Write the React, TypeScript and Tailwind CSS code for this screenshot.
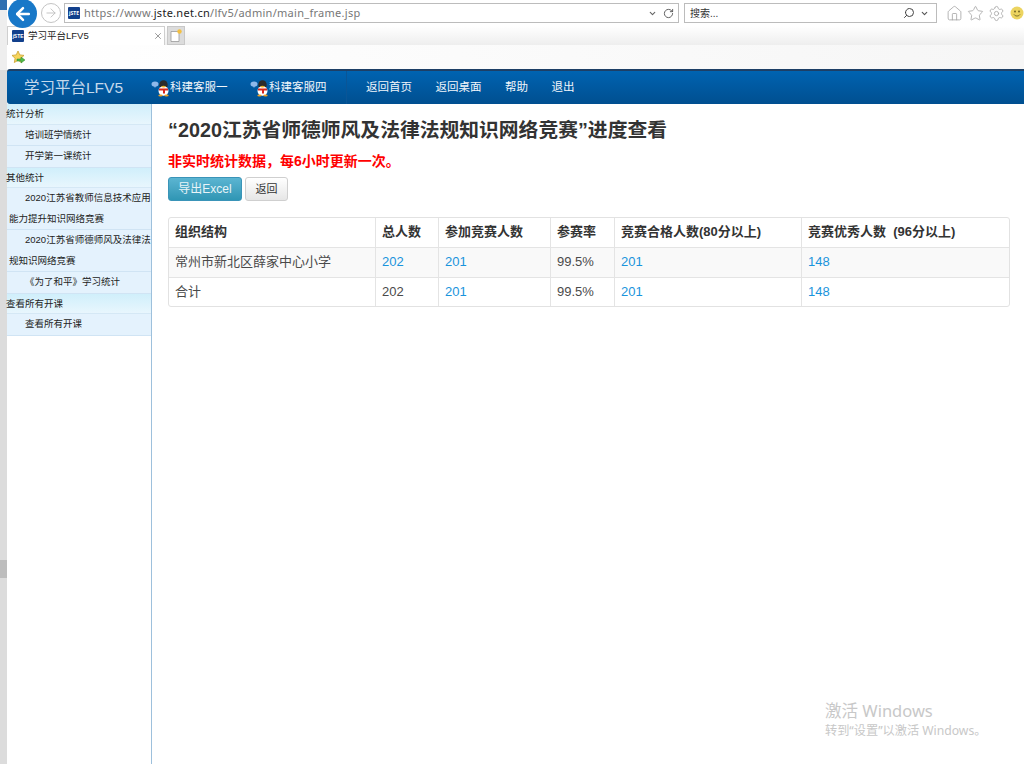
import React from "react";
import { ArrowLeft, ArrowRight, ChevronDown, Home, RotateCw, Search, Settings, Star, X } from "lucide-react";

const CJK = "font-['Liberation_Sans','Noto_Sans_CJK_SC',sans-serif]";
const UI = "font-['Noto_Sans','Noto_Sans_CJK_SC',sans-serif]";

const SiteIcon = () => (
  <div className="w-[12px] h-[12px] bg-[#12408c] rounded-[1px] flex items-center justify-center shrink-0">
    <span className="text-[5px] leading-none text-white font-bold">jSTE</span>
  </div>
);

const QQIcon = () => (
  <svg width="20" height="18" viewBox="0 0 20 18" className="shrink-0">
    <ellipse cx="4" cy="5" rx="3.5" ry="2.6" fill="#8fb8ea" />
    <path d="M3 7l2 0-1 2z" fill="#8fb8ea" />
    <ellipse cx="12.5" cy="6" rx="4.2" ry="4.8" fill="#2b2b2b" />
    <ellipse cx="12.5" cy="12" rx="5" ry="4.8" fill="#fff" />
    <path d="M8 9.5h9v2h-3v3h-2v-3H8z" fill="#d8261c" />
    <ellipse cx="12.5" cy="7.6" rx="2" ry="0.9" fill="#f0b020" />
    <ellipse cx="9.5" cy="16.6" rx="2.2" ry="1" fill="#f0a020" />
    <ellipse cx="15.5" cy="16.6" rx="2.2" ry="1" fill="#f0a020" />
  </svg>
);

const SideHead = ({ children }: { children: React.ReactNode }) => (
  <div className="h-[20.5px] leading-[20px] text-[9.5px] text-[#222] -indent-[1px] bg-gradient-to-b from-[#d0effb] to-[#e8f6fd] border-b border-[#d5e8f5]">
    {children}
  </div>
);

const SideItem = ({ children }: { children: React.ReactNode }) => (
  <div className="text-[9.5px] leading-[20.5px] text-[#222] bg-[#e4f2fd] border-b border-[#d0e4f4] indent-[16px] pl-[2px]">
    {children}
  </div>
);

const columns = ["w-[207px]", "w-[63px]", "w-[112px]", "w-[64px]", "w-[187px]", "flex-1"];

const Row = ({ cells, className, bold }: { cells: React.ReactNode[]; className?: string; bold?: boolean }) => (
  <div className={`flex h-[30px] border-b border-[#e4e4e4] last:border-b-0 last:h-[29px] ${className ?? ""}`}>
    {cells.map((c, i) => (
      <div
        key={i}
        className={`${columns[i]} px-[6px] pb-[1px] flex items-center text-[13px] whitespace-pre border-r border-[#e4e4e4] last:border-r-0 ${
          bold ? "font-bold text-[#333]" : "text-[#4a4a4a]"
        }`}
      >
        {c}
      </div>
    ))}
  </div>
);

const Num = ({ children }: { children: React.ReactNode }) => <a className="text-[#1a94dc]">{children}</a>;

export default function App() {
  return (
    <div className={`relative w-[1024px] h-[764px] overflow-hidden bg-white flex ${CJK}`}>
      {/* window edge */}
      <div className="w-[7px] shrink-0 bg-[#dcdcdc] flex flex-col">
        <div className="h-[10px] bg-[#2f6fb0]" />
        <div className="h-[60px] bg-[#eeeeee]" />
        <div className="h-[490px]" />
        <div className="h-[18px] bg-[#bdbdbd]" />
      </div>

      <div className="flex-1 min-w-0 flex flex-col">
        {/* address bar */}
        <div className="h-[26px] flex items-center bg-white pl-[31px]">
          <div className="w-[20px] h-[20px] rounded-full border border-[#c4c4c4] flex items-center justify-center text-[#bdbdbd] mr-[3px] ml-[3px]">
            <ArrowRight size={14} strokeWidth={1.5} />
          </div>
          <div className={`w-[615px] h-[20px] border border-[#bcbcbc] flex items-center pl-[3px] pr-[4px] text-[11px] text-[#777] ${UI}`}>
            <SiteIcon />
            <span className="ml-[4px] tracking-[0.28px]">
              https://www.<span className="text-[#222]">jste.net.cn</span>/lfv5/admin/main_frame.jsp
            </span>
            <ChevronDown size={9} strokeWidth={3} className="ml-auto mr-[6px] text-[#666]" />
            <RotateCw size={11} strokeWidth={2} className="text-[#555]" />
          </div>
          <div className="ml-[5px] w-[253px] h-[20px] border border-[#bcbcbc] flex items-center pl-[5px] pr-[7px] text-[10px] text-[#333]">
            <span>搜索...</span>
            <Search size={12} strokeWidth={2} className="ml-auto mr-[5px] text-[#444] -scale-x-100" />
            <ChevronDown size={9} strokeWidth={3} className="text-[#555]" />
          </div>
          <div className="ml-[9px] flex items-center gap-[4px] text-[#a8a8a8]">
            <Home size={17} strokeWidth={1.2} />
            <Star size={17} strokeWidth={1.2} />
            <Settings size={17} strokeWidth={1.2} />
            <svg width="14" height="14" viewBox="0 0 14 14" className="ml-[1px]">
              <circle cx="7" cy="7" r="6.5" fill="#ecd460" />
              <circle cx="5" cy="5.5" r="0.9" fill="#6b6020" />
              <circle cx="9" cy="5.5" r="0.9" fill="#6b6020" />
              <path d="M4 8.5c1.5 2 4.5 2 6 0" stroke="#6b6020" fill="none" strokeWidth="0.9" />
            </svg>
          </div>
        </div>

        {/* tab row */}
        <div className="h-[19px] flex bg-gradient-to-b from-white to-[#eeeeee]">
          <div className="w-[158px] h-[19px] bg-white border-x border-t border-[#cfcfcf] flex items-center pl-[4px] pr-[1px] text-[9.5px] text-[#222]">
            <SiteIcon />
            <span className="ml-[4px]">学习平台LFV5</span>
            <X size={10} strokeWidth={2} className="ml-auto text-[#888]" />
          </div>
          <div className="ml-[2px] w-[18px] h-[19px] bg-[#dcdcdc] border border-[#c8c8c8] flex items-center justify-center">
            <svg width="12" height="13" viewBox="0 0 12 13">
              <path d="M1 2.500h8v10H1z" fill="#fff" stroke="#999" strokeWidth="0.8" />
              <circle cx="9.500" cy="2.500" r="2.200" fill="#f4c040" />
            </svg>
          </div>
        </div>

        {/* favourites row */}
        <div className="h-[24px] flex items-center pl-[4px] bg-gradient-to-r from-white to-[#f6f6f6]">
          <svg width="15" height="15" viewBox="0 0 15 15">
            <path d="M7 1l1.800 3.900 4.200.5-3.100 2.900.8 4.200L7 10.400 3.300 12.500l.8-4.200L1 5.400l4.200-.5z" fill="#f7d55c" stroke="#c9a030" strokeWidth="0.8" />
            <path d="M6 9h4V7l4 3-4 3v-2H6z" fill="#52b848" stroke="#2f8a2a" strokeWidth="0.5" />
          </svg>
        </div>

        {/* nav bar */}
        <div className="h-[35px] border-t-2 border-[#1d3f66] rounded-l-[3px] bg-gradient-to-b from-[#0063b1] to-[#004f90] flex items-center text-[11.5px] text-[#f1f6fb]">
          <div className="ml-[17px] w-[128px] text-[15.500px] text-[#c4d9ec]">学习平台LFV5</div>
          <div className="w-[99px] flex items-center -ml-[1px]">
            <QQIcon />
            <span className="-ml-[1px] pt-[1px]">科建客服一</span>
          </div>
          <div className="w-[96px] flex items-center">
            <QQIcon />
            <span className="-ml-[1px] pt-[1px]">科建客服四</span>
          </div>
          <div className="h-full border-l border-[#0a5596] pl-[19px] pt-[1px] flex items-center gap-[23.5px]">
            <span>返回首页</span>
            <span>返回桌面</span>
            <span>帮助</span>
            <span>退出</span>
          </div>
        </div>

        <div className="flex-1 flex min-h-0">
          {/* sidebar */}
          <div className="w-[145px] shrink-0 border-r border-[#9dc0dc] bg-white">
            <SideHead>统计分析</SideHead>
            <SideItem>培训班学情统计</SideItem>
            <SideItem>开学第一课统计</SideItem>
            <SideHead>其他统计</SideHead>
            <SideItem>2020江苏省教师信息技术应用能力提升知识网络竞赛</SideItem>
            <SideItem>2020江苏省师德师风及法律法规知识网络竞赛</SideItem>
            <SideItem>《为了和平》学习统计</SideItem>
            <SideHead>查看所有开课</SideHead>
            <SideItem>查看所有开课</SideItem>
          </div>

          {/* content */}
          <div className="flex-1 min-w-0 pl-[16px] pr-[14px] pt-[14px]">
            <h1 className="text-[19.800px] leading-[24px] font-bold text-[#333] whitespace-nowrap">
              “2020江苏省师德师风及法律法规知识网络竞赛”进度查看
            </h1>
            <div className="mt-[10px] text-[14px] leading-[18px] font-bold text-[#ff0000]">
              非实时统计数据，每6小时更新一次。
            </div>
            <div className="mt-[7px] flex gap-[3px]">
              <button className="w-[74px] h-[24px] rounded-[3px] border border-[#3a94b8] bg-gradient-to-b from-[#5bb5d2] to-[#2f96b4] text-[12px] text-[#e8f4f8]">
                导出Excel
              </button>
              <button className="w-[43px] h-[24px] rounded-[3px] border border-[#cfcfcf] bg-gradient-to-b from-white to-[#e6e6e6] text-[11px] text-[#333]">
                返回
              </button>
            </div>
            <div className="mt-[16px] h-[90px] border border-[#e2e2e2] rounded-[3px] overflow-hidden">
              <Row bold cells={["组织结构", "总人数", "参加竞赛人数", "参赛率", "竞赛合格人数(80分以上)", "竞赛优秀人数\u00a0\u00a0(96分以上)"]} />
              <Row
                className="bg-[#f9f9f9]"
                cells={["常州市新北区薛家中心小学", <Num>202</Num>, <Num>201</Num>, "99.5%", <Num>201</Num>, <Num>148</Num>]}
              />
              <Row cells={["合计", "202", <Num>201</Num>, "99.5%", <Num>201</Num>, <Num>148</Num>]} />
            </div>
          </div>
        </div>
      </div>

      {/* back button sits over the chrome */}
      <div className="absolute left-[8px] top-[-1px] w-[29px] h-[29px] rounded-full bg-[#1878c8] flex items-center justify-center text-white">
        <ArrowLeft size={20} strokeWidth={3} />
      </div>

      {/* windows watermark */}
      <div className={`absolute left-[825px] top-[700px] text-[#c8c8c8] ${UI}`}>
        <div className="text-[16.500px] leading-[22px]">激活 Windows</div>
        <div className="text-[12.200px] leading-[18px]">转到“设置”以激活 Windows。</div>
      </div>
    </div>
  );
}
